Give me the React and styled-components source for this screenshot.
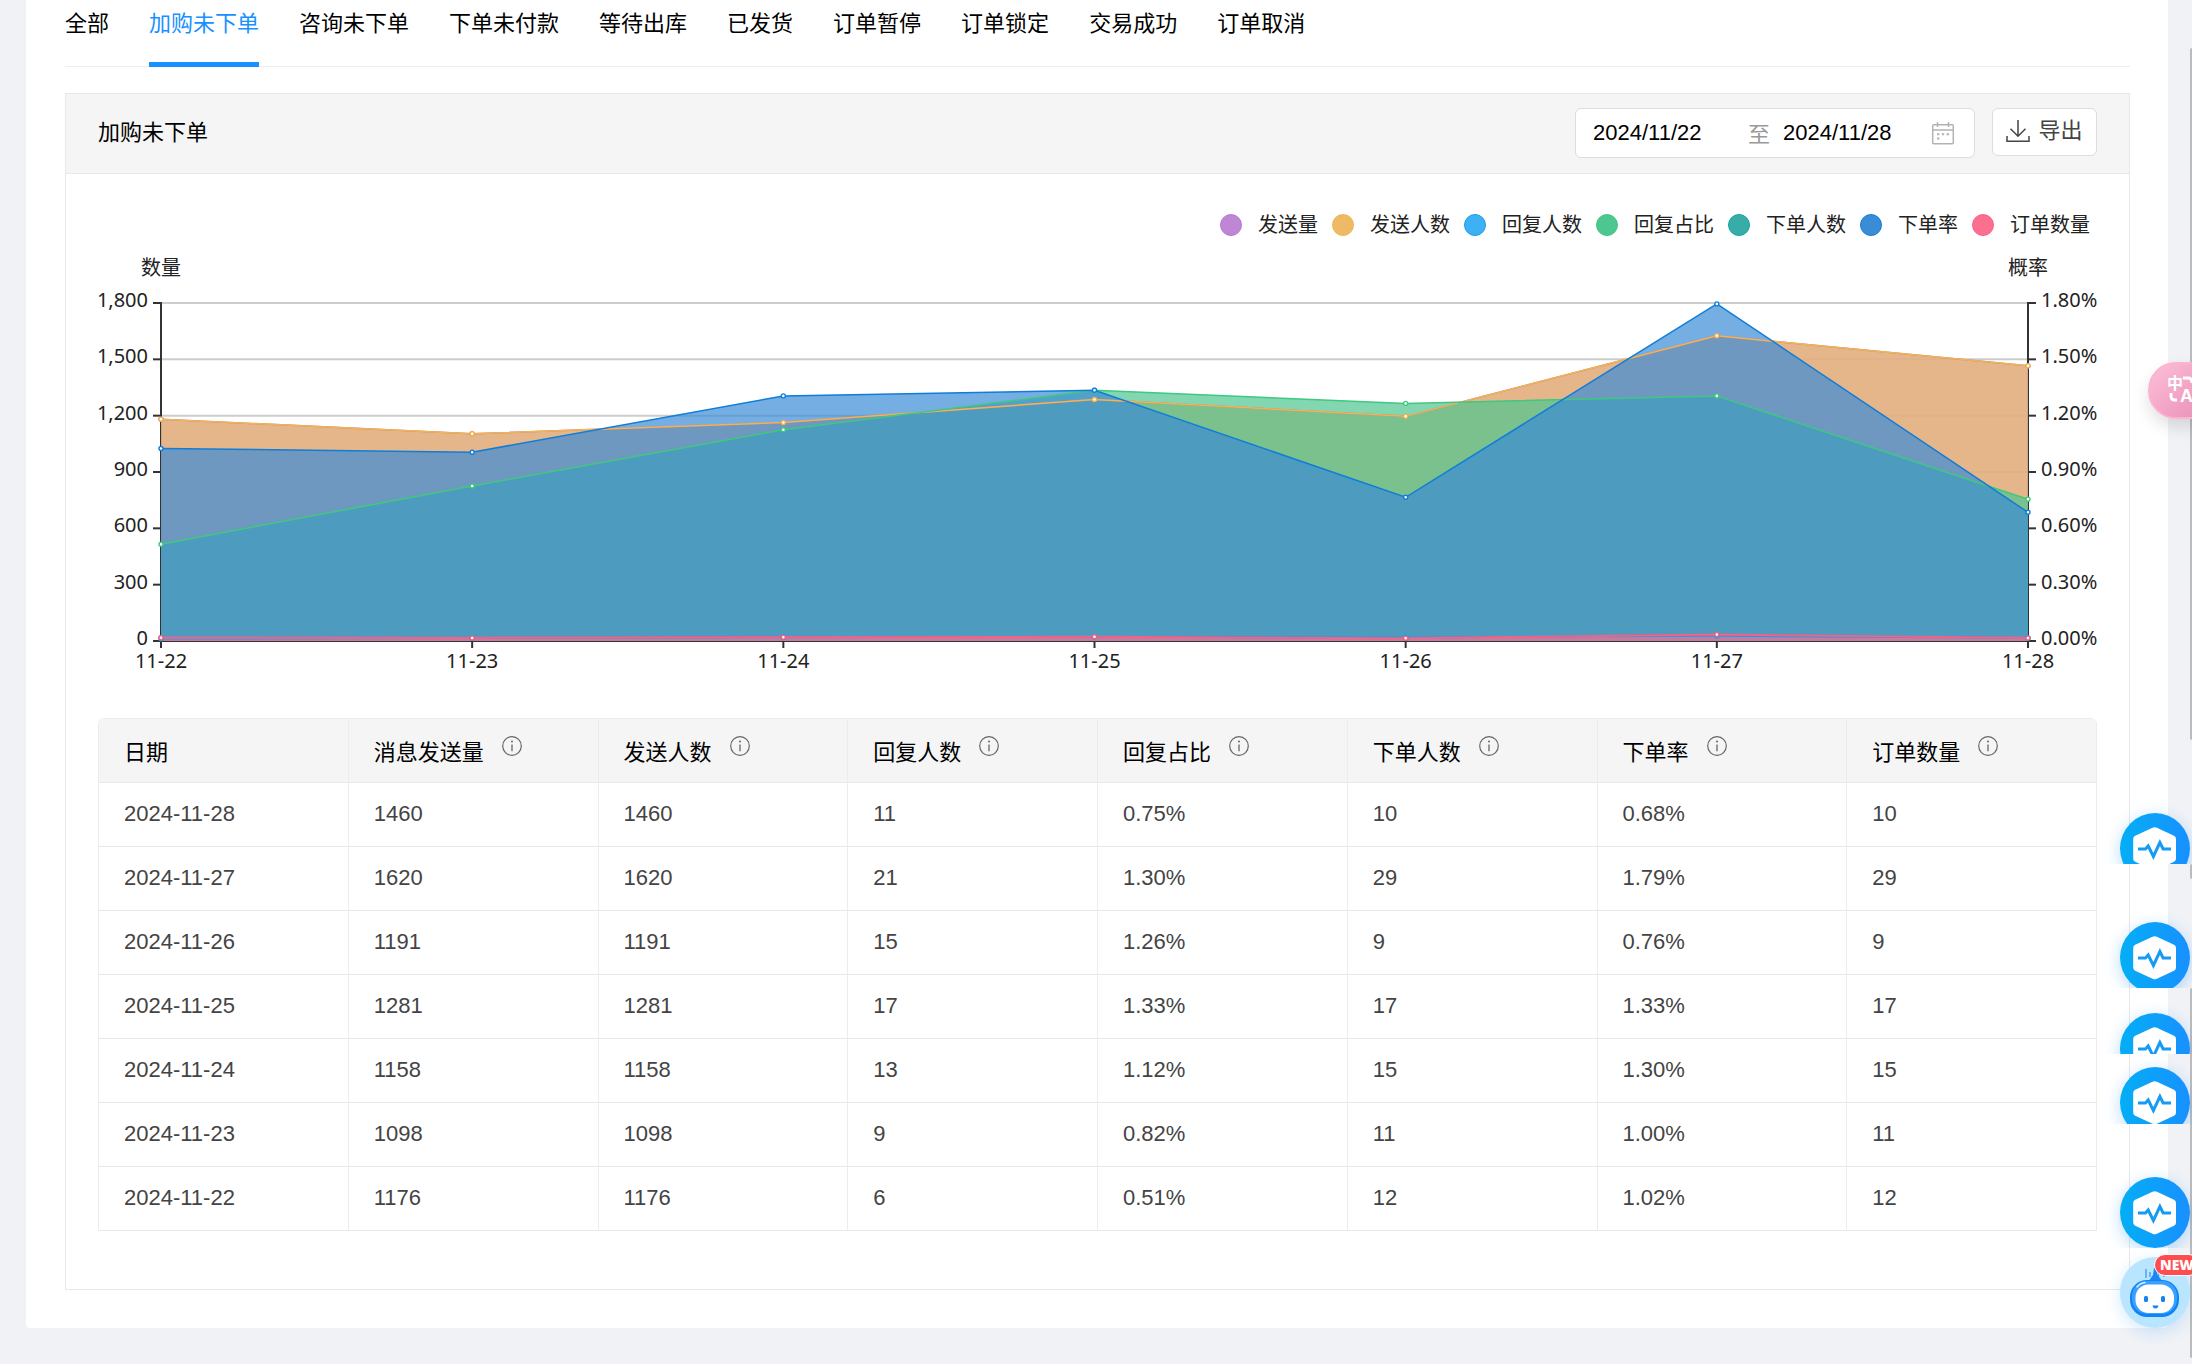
import { useLayoutEffect, useRef, useState } from "react";
import styled, { createGlobalStyle } from "styled-components";

const tabs = [
  "全部",
  "加购未下单",
  "咨询未下单",
  "下单未付款",
  "等待出库",
  "已发货",
  "订单暂停",
  "订单锁定",
  "交易成功",
  "订单取消",
];

const columns = [
  { key: "date", label: "日期" },
  { key: "sent", label: "消息发送量", hint: true },
  { key: "people", label: "发送人数", hint: true },
  { key: "replies", label: "回复人数", hint: true },
  { key: "replyRate", label: "回复占比", hint: true, percent: true },
  { key: "buyers", label: "下单人数", hint: true },
  { key: "orderRate", label: "下单率", hint: true, percent: true },
  { key: "orders", label: "订单数量", hint: true },
];

const rows = [
  { date: "2024-11-28", sent: 1460, people: 1460, replies: 11, replyRate: 0.75, buyers: 10, orderRate: 0.68, orders: 10 },
  { date: "2024-11-27", sent: 1620, people: 1620, replies: 21, replyRate: 1.3, buyers: 29, orderRate: 1.79, orders: 29 },
  { date: "2024-11-26", sent: 1191, people: 1191, replies: 15, replyRate: 1.26, buyers: 9, orderRate: 0.76, orders: 9 },
  { date: "2024-11-25", sent: 1281, people: 1281, replies: 17, replyRate: 1.33, buyers: 17, orderRate: 1.33, orders: 17 },
  { date: "2024-11-24", sent: 1158, people: 1158, replies: 13, replyRate: 1.12, buyers: 15, orderRate: 1.3, orders: 15 },
  { date: "2024-11-23", sent: 1098, people: 1098, replies: 9, replyRate: 0.82, buyers: 11, orderRate: 1.0, orders: 11 },
  { date: "2024-11-22", sent: 1176, people: 1176, replies: 6, replyRate: 0.51, buyers: 12, orderRate: 1.02, orders: 12 },
];

const series = [
  { key: "sent", label: "发送量", fill: "#c086d6", line: "#b678cf", max: 1800 },
  { key: "people", label: "发送人数", fill: "#eeba66", line: "#f3b548", max: 1800 },
  { key: "replies", label: "回复人数", fill: "#3db1f3", line: "#14a0f0", max: 1800 },
  { key: "replyRate", label: "回复占比", fill: "#4dc68f", line: "#3fc880", max: 1.8 },
  { key: "buyers", label: "下单人数", fill: "#38ada8", line: "#12a3a8", max: 1800 },
  { key: "orderRate", label: "下单率", fill: "#3b8cd6", line: "#107dd8", max: 1.8 },
  { key: "orders", label: "订单数量", fill: "#fc6f90", line: "#fa5f85", max: 1800 },
];

const days = [...rows].reverse();
const steps = [0, 1, 2, 3, 4, 5, 6];

function AreaChart() {
  const box = useRef(null);
  const [width, setWidth] = useState(1200);

  useLayoutEffect(() => {
    const measure = () => setWidth(box.current.clientWidth);
    measure();
    window.addEventListener("resize", measure);
    return () => window.removeEventListener("resize", measure);
  }, []);

  const left = 63;
  const right = width - 69;
  const top = 67;
  const bottom = 405;
  const x = (i) => left + ((right - left) * i) / (days.length - 1);
  const y = (share) => bottom - (bottom - top) * share;
  // the lines sit on the upper edge of the 2px axis
  const points = (s) => days.map((d, i) => [x(i), y(d[s.key] / s.max) - 1]);
  const path = (s) => points(s).map((p) => p.join(",")).join(" ");

  return (
    <ChartBox ref={box}>
      <ChartSvg role="img" aria-label="加购未下单">
        <AxisText x={left} y={39} textAnchor="middle">
          数量
        </AxisText>
        <AxisText x={right} y={39} textAnchor="middle">
          概率
        </AxisText>
        {steps.slice(1).map((n) => (
          <line key={n} x1={left} x2={right} y1={y(n / 6)} y2={y(n / 6)} stroke="#ccc" strokeWidth="2" />
        ))}
        <g stroke="#333" strokeWidth="2">
          <line x1={left} x2={left} y1={top - 1} y2={bottom} />
          <line x1={right} x2={right} y1={top - 1} y2={bottom} />
          <line x1={left} x2={right} y1={bottom} y2={bottom} />
          {steps.map((n) => (
            <g key={n}>
              <line x1={left - 8} x2={left} y1={y(n / 6)} y2={y(n / 6)} />
              <line x1={right} x2={right + 8} y1={y(n / 6)} y2={y(n / 6)} />
            </g>
          ))}
          {days.map((d, i) => (
            <line key={d.date} x1={x(i)} x2={x(i)} y1={bottom} y2={bottom + 7} />
          ))}
        </g>
        {series.map((s) => (
          <polygon
            key={s.key}
            points={`${left},${bottom} ${path(s)} ${right},${bottom}`}
            fill={s.fill}
            opacity="0.7"
          />
        ))}
        {series.map((s) => (
          <polyline
            key={s.key}
            points={path(s)}
            fill="none"
            stroke={s.line}
            strokeWidth={s.key === "orders" ? 2 : 1.5}
          />
        ))}
        {series.map((s) =>
          points(s).map(([px, py], i) => (
            <circle key={s.key + i} cx={px} cy={py} r="2" fill="#fff" stroke={s.line} strokeWidth="1.4" />
          ))
        )}
        {steps.map((n) => (
          <g key={n}>
            <AxisText x={left - 13} y={y(n / 6) + 4} textAnchor="end">
              {(n * 300).toLocaleString("en-US")}
            </AxisText>
            <AxisText x={right + 13} y={y(n / 6) + 4}>
              {(n * 0.3).toFixed(2)}%
            </AxisText>
          </g>
        ))}
        {days.map((d, i) => (
          <AxisText key={d.date} x={x(i)} y={bottom + 27} textAnchor="middle">
            {d.date.slice(5)}
          </AxisText>
        ))}
      </ChartSvg>
    </ChartBox>
  );
}

function InfoIcon() {
  return (
    <HintIcon viewBox="0 0 20 20" aria-hidden="true">
      <circle cx="10" cy="10" r="9.3" fill="none" stroke="#666" strokeWidth="1.2" />
      <circle cx="10" cy="5.6" r="1" fill="#666" />
      <path d="M10 8.4v6.8" stroke="#666" strokeWidth="1.3" />
    </HintIcon>
  );
}

function CalendarIcon() {
  return (
    <svg width="24" height="24" viewBox="0 0 24 24" fill="none" stroke="#b3b3b3" strokeWidth="1.5">
      <rect x="1.7" y="3.7" width="20.6" height="19" rx="1" />
      <path d="M1.7 9h20.6M6.5 1v5M17.5 1v5" />
      <path d="M6 13.2h2.4M10.8 13.2h2.4M15.6 13.2h2.4M6 17.6h2.4" strokeWidth="2" />
    </svg>
  );
}

function DownloadIcon() {
  return (
    <svg width="24" height="24" viewBox="0 0 24 24" fill="none" stroke="#444" strokeWidth="1.5">
      <path d="M12 1v16M4.5 9.8l7.5 7.4 7.5-7.4M1 17v5.2h22V17" />
    </svg>
  );
}

function PulseIcon() {
  return (
    <svg width="70" height="71" viewBox="0 0 70 71" aria-hidden="true">
      <path
        d="M32.5 14.8q2.2-1 4.4 0L54 22.7q2 1 2 3.3v19.5q0 2.3-2 3.3l-17.1 8q-2.2 1-4.4 0l-17.3-8q-2-1-2-3.3V26q0-2.3 2-3.3z"
        fill="#fff"
      />
      <path d="M18 36h7.5l2.7-3 5.2 10.5 6.5-14 3.2 6.5H51" fill="none" stroke="#169bf5" strokeWidth="3" />
    </svg>
  );
}

function RobotIcon() {
  return (
    <svg width="70" height="71" viewBox="0 0 70 71" aria-hidden="true">
      <path d="M26 12v9M30 15v5M38.5 15v5M44 17v3" stroke="#4aa5f8" strokeWidth="1.5" />
      <path d="M34 11h2.5l1 7 4 5h-12l3.5-5z" fill="#1a86f2" />
      <rect x="10" y="23" width="49" height="37" rx="17" fill="#0f84f7" />
      <rect x="12" y="24" width="45" height="33" rx="15" fill="#3aa0ff" />
      <rect x="15.5" y="27.5" width="38.5" height="28.5" rx="13" fill="#fff" />
      <path d="M17 30q3-4 8-4.5" fill="none" stroke="#d8f0ff" strokeWidth="1.5" strokeLinecap="round" />
      <rect x="24" y="39" width="4" height="6" rx="1.5" fill="#1684f0" />
      <rect x="41" y="39" width="4" height="6" rx="1.5" fill="#1684f0" />
      <path d="M32.5 48.5h6q-.5 3-3 3t-3-3z" fill="#1684f0" />
    </svg>
  );
}

function TranslateIcon() {
  return (
    <svg width="36" height="32" viewBox="0 0 36 32" fill="none" stroke="#fff" strokeWidth="3" aria-hidden="true">
      <IconGlyph x="-1" y="15" fontSize="16">
        中
      </IconGlyph>
      <IconGlyph x="12" y="28" fontSize="18">
        A
      </IconGlyph>
      <path d="M15 4h5q4 0 4 5M3 19v3q0 4 4 4h2" />
    </svg>
  );
}

export default function App() {
  return (
    <>
      <GlobalStyle />
      <Page>
        <TabBar>
          {tabs.map((name) => (
            <Tab key={name} $active={name === "加购未下单"}>
              {name}
            </Tab>
          ))}
        </TabBar>
        <Card>
          <CardHeader>
            <CardTitle>加购未下单</CardTitle>
            <DateRange>
              <StartInput type="text" aria-label="开始日期" defaultValue="2024/11/22" />
              <Until>至</Until>
              <DateInput type="text" aria-label="结束日期" defaultValue="2024/11/28" />
              <CalendarIcon />
            </DateRange>
            <ExportButton>
              <DownloadIcon />
              导出
            </ExportButton>
          </CardHeader>
          <CardBody>
            <Legend>
              {series.map((s) => (
                <LegendItem key={s.key}>
                  <Dot $fill={s.fill} $line={s.line} />
                  {s.label}
                </LegendItem>
              ))}
            </Legend>
            <AreaChart />
            <Table>
              <thead>
                <tr>
                  {columns.map((c) => (
                    <Th key={c.key}>
                      {c.label}
                      {c.hint && <InfoIcon />}
                    </Th>
                  ))}
                </tr>
              </thead>
              <tbody>
                {rows.map((row) => (
                  <tr key={row.date}>
                    {columns.map((c) => (
                      <Td key={c.key}>{c.percent ? `${row[c.key].toFixed(2)}%` : row[c.key]}</Td>
                    ))}
                  </tr>
                ))}
              </tbody>
            </Table>
          </CardBody>
        </Card>
      </Page>

      <Thumb $top={48} $height={692} />
      <Thumb $top={864} $height={15} />
      <Thumb $top={988} $height={370} />
      <TranslateButton aria-label="翻译">
        <TranslateIcon />
      </TranslateButton>
      <Dock>
        <PulseButton aria-label="诊断" $height={51} $gap={58}>
          <PulseIcon />
        </PulseButton>
        <PulseButton aria-label="诊断" $height={66} $gap={25}>
          <PulseIcon />
        </PulseButton>
        <PulseButton aria-label="诊断" $height={41} $gap={13}>
          <PulseIcon />
        </PulseButton>
        <PulseButton aria-label="诊断" $height={57} $gap={53}>
          <PulseIcon />
        </PulseButton>
        <PulseButton aria-label="诊断" $height={71} $gap={9}>
          <PulseIcon />
        </PulseButton>
        <RobotButton aria-label="智能助手">
          <RobotIcon />
          <Badge>NEW</Badge>
        </RobotButton>
      </Dock>
    </>
  );
}

// Styling starts here

const GlobalStyle = createGlobalStyle`
  * {
    box-sizing: border-box;
  }
  html {
    overflow: hidden;
  }
  body {
    margin: 0;
    background: #f0f2f6;
    color: #000;
    font-family: "Liberation Sans", "Noto Sans CJK SC", sans-serif;
    font-size: 22px;
  }
  #root {
    position: relative;
    overflow: hidden;
  }
  button, input {
    font: inherit;
    color: inherit;
  }
`;

const Page = styled.main`
  margin: 0 24px 36px 26px;
  padding: 0 38px 38px 39px;
  background: #fff;
  border-radius: 0 0 4px 4px;
`;

const TabBar = styled.nav`
  display: flex;
  gap: 40px;
  border-bottom: 1px solid #eee;
`;

const Tab = styled.button`
  margin: 0 0 -1px;
  padding: 9px 0 23px;
  border: 0;
  border-bottom: 5px solid ${({ $active }) => ($active ? "#1890ff" : "transparent")};
  background: none;
  color: ${({ $active }) => ($active ? "#1890ff" : "#000")};
  line-height: 30px;
  white-space: nowrap;
`;

const Card = styled.section`
  margin-top: 26px;
  border: 1px solid #e8e8e8;
`;

const CardHeader = styled.header`
  display: flex;
  align-items: flex-start;
  gap: 17px;
  padding: 14px 32px 15px;
  border-bottom: 1px solid #e8e8e8;
  background: #f5f5f5;
`;

const CardTitle = styled.h2`
  flex: 1;
  margin: 0;
  font-size: 22px;
  font-weight: 400;
  line-height: 50px;
`;

const DateRange = styled.div`
  display: flex;
  align-items: center;
  width: 400px;
  height: 50px;
  padding: 0 19px 0 17px;
  border: 1px solid #ddd;
  border-radius: 6px;
  background: #fff;
`;

const DateInput = styled.input`
  flex: 1;
  min-width: 0;
  padding: 0;
  border: 0;
  outline: 0;
  background: none;
`;

const StartInput = styled(DateInput)`
  flex: none;
  width: 155px;
`;

const Until = styled.span`
  margin-right: 13px;
  padding-bottom: 3px;
  color: #999;
`;

const ExportButton = styled.button`
  display: flex;
  justify-content: center;
  gap: 8px;
  width: 105px;
  height: 48px;
  padding: 10px 0 0;
  border: 1px solid #ddd;
  border-radius: 6px;
  background: #fff;
  color: #444;
  line-height: 24px;
`;

const CardBody = styled.div`
  padding: 40px 32px 58px;
`;

const Legend = styled.div`
  display: flex;
  justify-content: flex-end;
  gap: 14px;
  padding-right: 7px;
  font-family: "Noto Sans", "Noto Sans CJK SC", sans-serif;
  font-size: 20px;
  line-height: 22px;
  color: #222;
`;

const LegendItem = styled.span`
  display: flex;
  align-items: center;
  gap: 16px;
`;

const Dot = styled.i`
  width: 22px;
  height: 22px;
  border: 1px solid ${({ $line }) => $line};
  border-radius: 50%;
  background: ${({ $fill }) => $fill};
`;

const ChartBox = styled.div`
  height: 442px;
  margin-bottom: 40px;
`;

const ChartSvg = styled.svg`
  display: block;
  width: 100%;
  height: 100%;
  font-family: "Noto Sans", "Noto Sans CJK SC", sans-serif;
  font-size: 20px;
`;

const AxisText = styled.text`
  fill: #222;
`;

const Table = styled.table`
  width: 100%;
  table-layout: fixed;
  border-collapse: separate;
  border-spacing: 0;
  border-top: 1px solid #ececec;
  border-left: 1px solid #ececec;
  border-radius: 6px 6px 0 0;
  text-align: left;
  overflow: hidden;
`;

const Th = styled.th`
  height: 64px;
  padding: 0 0 2px 25px;
  border-right: 1px solid #ececec;
  border-bottom: 1px solid #e8e8e8;
  background: #f5f5f5;
  font-weight: 400;
  white-space: nowrap;
`;

const Td = styled.td`
  height: 64px;
  padding: 0 0 2px 25px;
  border-right: 1px solid #ececec;
  border-bottom: 1px solid #e8e8e8;
  color: #444;
`;

const HintIcon = styled.svg`
  width: 20px;
  height: 20px;
  margin-left: 18px;
  vertical-align: 4px;
`;

const Thumb = styled.div`
  position: absolute;
  top: ${({ $top }) => $top}px;
  right: 0;
  width: 2px;
  height: ${({ $height }) => $height}px;
  border-radius: 2px 0 0 2px;
  background: #bbb;
`;

const TranslateButton = styled.button`
  position: absolute;
  top: 362px;
  right: -16px;
  width: 60px;
  height: 57px;
  padding: 0 0 2px 18px;
  border: 2px solid #fbb3d0;
  border-radius: 28px 0 0 28px;
  background: linear-gradient(135deg, #fcc0d8, #ea8fb8);
  box-shadow: 0 8px 16px rgba(0, 0, 0, 0.12);
  text-align: left;
  line-height: 0;
`;

const IconGlyph = styled.text`
  fill: #fff;
  stroke: none;
  font-family: "Liberation Sans", "Noto Sans CJK SC", sans-serif;
  font-weight: 700;
`;

const Dock = styled.div`
  position: absolute;
  top: 813px;
  right: 2px;
  display: flex;
  flex-direction: column;
`;

const PulseButton = styled.button`
  width: 70px;
  height: ${({ $height }) => $height}px;
  margin-bottom: ${({ $gap }) => $gap}px;
  padding: 0;
  border: 0;
  background: none;
  clip-path: inset(-20px -20px 0 -20px);

  svg {
    display: block;
    border-radius: 50%;
    background: linear-gradient(90deg, #04aef5, #1890ff);
    box-shadow: 0 4px 16px rgba(24, 144, 255, 0.3);
  }
`;

const RobotButton = styled.button`
  position: relative;
  width: 70px;
  height: 71px;
  padding: 0;
  border: 0;
  border-radius: 50%;
  background: #b9e5ff;
  box-shadow: 0 4px 16px rgba(24, 144, 255, 0.2);

  svg {
    display: block;
  }
`;

const Badge = styled.span`
  position: absolute;
  top: -3px;
  left: 34px;
  padding: 0 5px;
  border: 1px solid #fff;
  border-radius: 11px;
  background: #ff4d4f;
  color: #fff;
  font-family: "Open Sans", sans-serif;
  font-size: 14px;
  font-weight: 800;
  line-height: 20px;
`;
